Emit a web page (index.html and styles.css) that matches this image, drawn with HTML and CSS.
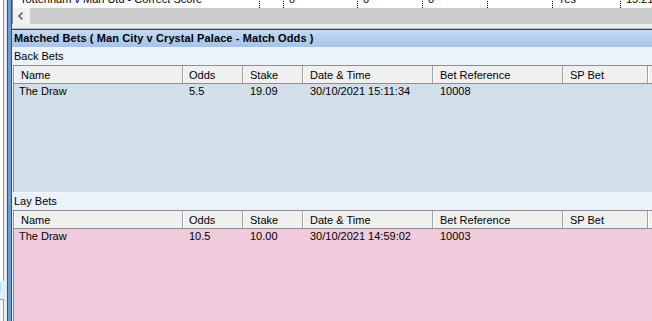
FILE: index.html
```html
<!DOCTYPE html>
<html>
<head>
<meta charset="utf-8">
<link rel="stylesheet" href="styles.css">
</head>
<body>
<div class="app">
  <div class="leftpanel">
    <div class="lbox lbox-top"></div>
    <div class="licon">d</div>
    <div class="lbox lbox-bottom"></div>
  </div>
  <div class="splitter"></div>
  <div class="main">
    <div class="topgrid">
      <div class="toprow">
        <div class="trcells">
          <div class="tc c-name">Tottenham v Man Utd - Correct Score</div>
          <div class="tc c-n1"></div>
          <div class="tc c-n2">0</div>
          <div class="tc c-n3">0</div>
          <div class="tc c-n3">0</div>
          <div class="tc c-n3"></div>
          <div class="tc c-n4">Yes</div>
          <div class="tc c-n5">15.21</div>
        </div>
      </div>
      <div class="hscroll">
        <div class="sbtn"><svg width="16" height="16" viewBox="0 0 16 16"><path d="M9.5 4.5 L6 8 L9.5 11.5" fill="none" stroke="#606060" stroke-width="1.6"/></svg></div>
        <div class="sthumb"></div>
      </div>
    </div>
    <div class="gap"></div>
    <div class="mbheader">Matched Bets ( Man City v Crystal Palace - Match Odds )</div>
    <div class="band">Back Bets</div>
    <div class="grid grid-back">
      <div class="ghead">
        <div class="hc w-name">Name</div>
        <div class="hc w-odds">Odds</div>
        <div class="hc w-stake">Stake</div>
        <div class="hc w-date">Date &amp; Time</div>
        <div class="hc w-ref">Bet Reference</div>
        <div class="hc w-sp">SP Bet</div>
        <div class="hc w-rest"></div>
      </div>
      <div class="grow">
        <div class="dc w-name">The Draw</div>
        <div class="dc w-odds">5.5</div>
        <div class="dc w-stake">19.09</div>
        <div class="dc w-date">30/10/2021 15:11:34</div>
        <div class="dc w-ref">10008</div>
        <div class="dc w-sp"></div>
      </div>
    </div>
    <div class="band band-lay">Lay Bets</div>
    <div class="grid grid-lay">
      <div class="ghead">
        <div class="hc w-name">Name</div>
        <div class="hc w-odds">Odds</div>
        <div class="hc w-stake">Stake</div>
        <div class="hc w-date">Date &amp; Time</div>
        <div class="hc w-ref">Bet Reference</div>
        <div class="hc w-sp">SP Bet</div>
        <div class="hc w-rest"></div>
      </div>
      <div class="grow">
        <div class="dc w-name">The Draw</div>
        <div class="dc w-odds">10.5</div>
        <div class="dc w-stake">10.00</div>
        <div class="dc w-date">30/10/2021 14:59:02</div>
        <div class="dc w-ref">10003</div>
        <div class="dc w-sp"></div>
      </div>
    </div>
  </div>
</div>
</body>
</html>
```
FILE: styles.css
```css
* { box-sizing: border-box; }
html, body { margin: 0; padding: 0; }
body {
  width: 652px;
  height: 321px;
  overflow: hidden;
  font-family: "Liberation Sans", Arial, sans-serif;
  font-size: 11px;
  color: #000;
  background: #f0f0f0;
}
.app {
  display: flex;
  height: 321px;
}
.leftpanel {
  width: 7px;
  background: #e3ecf7;
  display: flex;
  flex-direction: column;
  overflow: hidden;
}
.lbox {
  width: 4px;
  background: #ffffff;
  border-right: 1px solid #9a9a9a;
}
.lbox-top { height: 281px; }
.licon {
  height: 18px;
  width: 7px;
  font-size: 10px;
  line-height: 14px;
  color: #3a2a00;
  text-indent: -5px;
  overflow: hidden;
}
.lbox-bottom {
  flex: 1;
  border-top: 1px solid #9a9a9a;
  background: #f4f4f4;
}
.splitter {
  width: 5px;
  background: #6e9dd5;
  border-left: 1px solid #3c4e66;
  border-right: 1px solid #3c4e66;
}
.main {
  flex: 1;
  display: flex;
  flex-direction: column;
  min-width: 0;
  overflow: hidden;
}
.topgrid {
  height: 24px;
  border-left: 1px solid #8a8a8a;
  background: #fff;
}
.toprow {
  height: 8px;
  overflow: hidden;
}
.trcells {
  display: flex;
  margin-top: -9px;
  height: 17px;
  line-height: 17px;
  white-space: nowrap;
}
.tc {
  border-right: 1px dotted #000;
  padding-left: 5px;
  overflow: hidden;
  flex: none;
}
.c-name { width: 247px; padding-left: 7px; }
.c-n1 { width: 24px; }
.c-n2 { width: 74px; }
.c-n3 { width: 65px; }
.c-n4 { width: 68px; }
.c-n5 { width: 60px; border-right: none; }
.hscroll {
  height: 16px;
  display: flex;
  background: #cdcdcd;
}
.sbtn {
  width: 17px;
  height: 16px;
  background: #f0f0f0;
}
.sbtn svg { display: block; }
.sthumb { flex: 1; background: #cdcdcd; }
.gap {
  height: 5px;
  background: #ececec;
  border-bottom: 1px solid #b8b8b8;
}
.mbheader {
  height: 18px;
  border-top: 1px solid #3a4653;
  background: linear-gradient(#c4d9f4, #a6c3ea);
  font-weight: bold;
  line-height: 17px;
  padding-left: 2px;
  letter-spacing: 0.1px;
  white-space: nowrap;
}
.band {
  height: 18px;
  line-height: 18px;
  background: #eaf2fb;
  padding-left: 2px;
}
.band-lay {
  border-top: 1px solid #f4f8fc;
  line-height: 16px;
}
.grid {
  margin-left: 1px;
  border-left: 1px solid #8e8e8e;
  border-top: 1px solid #8e8e8e;
  overflow: hidden;
}
.grid-back {
  height: 127px;
  background: #d2dfe8;
}
.grid-lay {
  flex: 1;
  background: #efcbdb;
}
.ghead {
  display: flex;
  height: 18px;
  background: #f0f0f0;
  border-bottom: 1px solid #8e8e8e;
  line-height: 18px;
  white-space: nowrap;
}
.hc {
  flex: none;
  border-right: 1px solid #a0a0a0;
  padding-left: 7px;
  box-shadow: inset 1px 0 0 #ffffff;
}
.grow {
  display: flex;
  height: 17px;
  line-height: 15px;
  white-space: nowrap;
}
.dc {
  flex: none;
  padding-left: 7px;
}
.dc.w-name { padding-left: 5px; }
.hc.w-odds, .dc.w-odds { padding-left: 6px; }
.w-name { width: 169px; }
.w-odds { width: 60px; }
.w-stake { width: 60px; }
.w-date { width: 130px; }
.w-ref { width: 130px; }
.w-sp { width: 85px; }
.w-rest { flex: 1; border-right: none; }
```
